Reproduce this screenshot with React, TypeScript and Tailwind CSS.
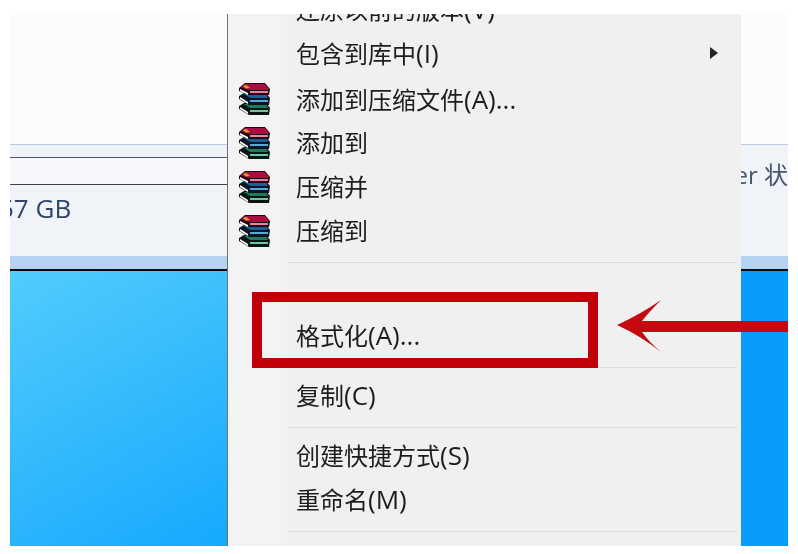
const font = { fontFamily: '"Open Sans", "Noto Sans CJK SC", sans-serif' };

function RarIcon() {
  return (
    <svg viewBox="0 0 32 33" className="w-8 h-[33px] shrink-0">
      {/* green book */}
      <path d="M1 23 L6 20 H28 L32 25 L31 32 H11 L1 26 Z" fill="#0c1512" />
      <path d="M6 21 H28 L30 25 H12 Z" fill="#1f7a5e" />
      <path d="M12 27 H30 V29 H12 Z" fill="#62c9a4" />
      <path d="M2 24 L10 29 V31 L2 26 Z" fill="#fff" />
      {/* blue book */}
      <path d="M1 13 L6 10 H28 L32 15 L31 22 H11 L1 16 Z" fill="#0b1420" />
      <path d="M6 11 H28 L30 15 H12 Z" fill="#1b5f93" />
      <path d="M12 17 H30 V19 H12 Z" fill="#5aa7d8" />
      <path d="M2 14 L10 19 V21 L2 16 Z" fill="#fff" />
      {/* red book */}
      <path d="M1 5 L7 0 H27 L32 6 L31 12 H11 L1 8 Z" fill="#1c0a10" />
      <path d="M7 1 H27 L31 6 L30 7 H12 L3 4.5 Z" fill="#a80f3c" />
      <path d="M5 3 L8 2 L12 5 L8 5.5 Z" fill="#e89a3c" />
      <path d="M12 8 H30 V10 H12 Z" fill="#ee7fa6" />
      <path d="M2 6 L10 10 V12 L2 8 Z" fill="#fff" />
    </svg>
  );
}

function Item({ label, latin, icon, arrow, className }: { label: string; latin?: string; icon?: boolean; arrow?: boolean; className?: string }) {
  return (
    <div className={`flex items-center h-11 pb-[2px] pl-[10px] pr-[23px] ${className ?? ''}`}>
      <div className="w-[58px] shrink-0">{icon && <RarIcon />}</div>
      <span className="flex-1 text-[24px] leading-none text-[#1d1d1d] whitespace-nowrap">
        {label}
        {latin && <span className="text-[26px]">{latin}</span>}
      </span>
      {arrow && <div className="w-0 h-0 border-y-[6px] border-y-transparent border-l-[8px] border-l-[#222]" />}
    </div>
  );
}

function Sep({ className }: { className?: string }) {
  return <div className={`h-px ml-[60px] mr-1 bg-[#dcdcdc] ${className ?? ''}`} />;
}

function Side({ children }: { children?: React.ReactNode }) {
  return (
    <>
      <div className="h-[131px] shrink-0 bg-[#fcfcfd] border-b border-b-[#b9cbe0]" />
      {children}
      <div className="h-[13px] shrink-0 bg-[#b5d3f2]" />
      <div className="h-[2px] shrink-0 bg-[#0a0a0a]" />
    </>
  );
}

export default function App() {
  return (
    <div className="relative w-[798px] h-[554px] bg-white overflow-hidden blur-[0.4px]" style={font}>
      <div className="flex h-full pl-[10px] pr-[10px] pt-[14px] pb-2">
        {/* left pane */}
        <div className="w-[217px] shrink-0 flex flex-col overflow-hidden">
          <Side>
            <div className="h-[13px] shrink-0 bg-[#eef2f9] border-b border-b-[#55585c]" />
            <div className="h-[27px] shrink-0 bg-[#f7f8fb] border-b border-b-[#3f4246]" />
            <div className="h-[71px] shrink-0 bg-[#f0f3f8] flex items-center pb-[26px]">
              <span className="-ml-[11px] text-[26px] leading-none text-[#2f4668] whitespace-nowrap">57 GB</span>
            </div>
          </Side>
          <div className="flex-1 bg-linear-[150deg] from-[#52ccfc] to-[#16a9fe]" />
        </div>

        {/* context menu */}
        <div className="w-[514px] shrink-0 bg-[linear-gradient(to_right,#f3f3f3_59px,#f0f0f0_59px)] border-l border-l-[#6f7275] overflow-hidden">
          <div className="-mt-[26px]">
            <Item label="还原以前的版本" latin="(V)" />
            <Item label="包含到库中" latin="(I)" arrow />
            <Item label="添加到压缩文件" latin="(A)..." icon className="mt-[2px]" />
            <Item label="添加到" icon />
            <Item label="压缩并" icon />
            <Item label="压缩到" icon />
            <Sep className="mt-2" />
            <div className="h-[51px]" />
            <Item label="格式化" latin="(A)..." />
            <Sep className="mt-[9px]" />
            <Item label="复制" latin="(C)" className="mt-[6px]" />
            <Sep className="mt-[9px]" />
            <Item label="创建快捷方式" latin="(S)" className="mt-[6px]" />
            <Item label="重命名" latin="(M)" />
            <Sep className="mt-[9px]" />
          </div>
        </div>

        {/* right pane */}
        <div className="flex-1 flex flex-col overflow-hidden">
          <Side>
            <div className="h-[111px] shrink-0 bg-[#f0f3f8] flex justify-end pt-[18px]">
              <span className="text-[24px] leading-none text-[#46566e] whitespace-nowrap">er 状</span>
            </div>
          </Side>
          <div className="flex-1 bg-[#0a9cfb]" />
        </div>
      </div>

      {/* red annotation box */}
      <div className="absolute left-[252px] top-[292px] w-[346px] h-[76px] border-[10px] border-[#c00008]" />

      {/* red arrow */}
      <svg viewBox="0 0 171 60" className="absolute left-[617px] top-[296px] w-[171px] h-[60px]">
        <path d="M0 29 Q24 18 44 4 Q32 16 25 25 H171 V36 H25 Q32 46 44 56 Q24 40 0 29 Z" fill="#c40a10" />
      </svg>
    </div>
  );
}
